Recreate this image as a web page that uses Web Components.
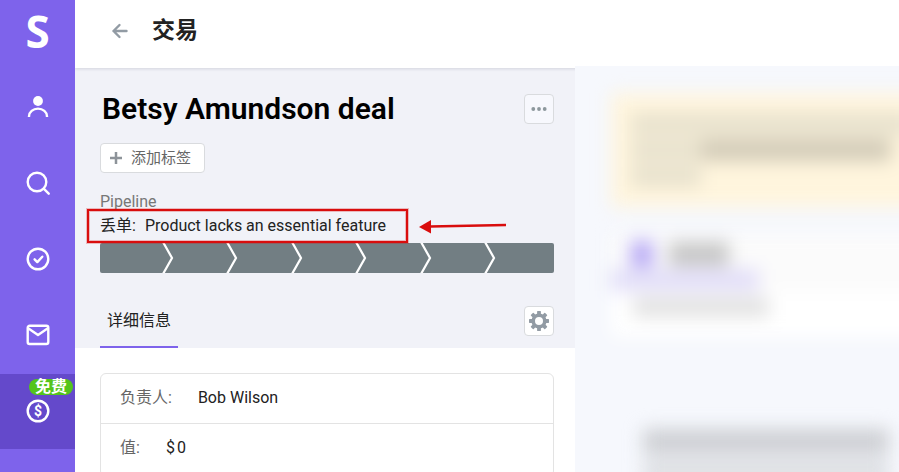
<!DOCTYPE html>
<html lang="zh-CN">
<head>
<meta charset="utf-8">
<meta name="viewport" content="width=device-width, initial-scale=1">
<title>交易</title>
<style>
    html, body { height: 100%; }
    body {
        margin: 0;
        overflow: hidden;
        background: #fff;
        color: #222;
        font: 16px/20px Roboto, "Noto Sans CJK SC", sans-serif;
    }
</style>
</head>
<body>
<crm-app>
    <crm-sidebar slot="sidebar">
        <nav-item icon="user" label="联系人"></nav-item>
        <nav-item icon="search" label="搜索"></nav-item>
        <nav-item icon="check" label="任务"></nav-item>
        <nav-item icon="mail" label="邮件"></nav-item>
        <nav-item icon="dollar" label="交易" active><span slot="badge">免费</span></nav-item>
    </crm-sidebar>
    <page-header slot="header">交易</page-header>
    <deal-summary>
        <span slot="name">Betsy Amundson deal</span>
        <span slot="pipeline">Pipeline</span>
        <lost-reason slot="reason" label="丢单:">Product lacks an essential feature</lost-reason>
        <stage-bar slot="stages" steps="7"></stage-bar>
    </deal-summary>
    <field-list>
        <field-row label="负责人:">Bob Wilson</field-row>
        <field-row label="值:"><span>$</span><span>0</span></field-row>
    </field-list>
    <activity-feed slot="feed"></activity-feed>
</crm-app>

<script>
    const icons = {
        user: '<circle cx="12" cy="6" r="4.9" fill="currentColor" stroke="none"/><path d="M3 22v-.8a9 7.6 0 0 1 18 0v.8" stroke-linecap="butt"/>',
        search: '<circle cx="11" cy="11" r="9.3"/><path d="M17.7 17.7l5 5"/>',
        check: '<circle cx="12" cy="12" r="10.3"/><path d="M8.6 12.3l2.7 2.8 5-5.4"/>',
        mail: '<rect x="1.7" y="2.7" width="20.6" height="18.3" rx="2"/><path d="M2.5 5.5l9.5 6.5 9.5-6.5"/>',
        dollar: '<circle cx="12" cy="12" r="10.3"/><text x="12" y="17" text-anchor="middle" font-family="Roboto, sans-serif" font-weight="700" font-size="14" fill="currentColor" stroke="none">$</text>'
    };

    class BaseElement extends HTMLElement {
        connectedCallback() {
            if (this.shadowRoot) return;
            this.attachShadow({ mode: 'open' });
            this.shadowRoot.innerHTML = this.template();
        }
    }

    class CrmApp extends BaseElement {
        template() {
            return `
                <style>
                    :host { display: flex; height: 100vh; overflow: hidden; }
                    .page { flex: 1; min-width: 0; display: flex; flex-direction: column; }
                    main {
                        flex: 1;
                        min-height: 0;
                        display: grid;
                        grid-template-columns: minmax(0, 125fr) minmax(0, 81fr);
                    }
                    .deal { overflow: hidden; }
                </style>
                <slot name="sidebar"></slot>
                <div class="page">
                    <slot name="header"></slot>
                    <main>
                        <div class="deal"><slot></slot></div>
                        <slot name="feed"></slot>
                    </main>
                </div>
            `;
        }
    }

    class CrmSidebar extends BaseElement {
        template() {
            return `
                <style>
                    :host { display: block; flex: 0 0 75px; background: #7e63eb; color: #fff; z-index: 2; }
                    .logo {
                        display: block;
                        height: 70px;
                        color: inherit;
                        text-align: center;
                        text-decoration: none;
                        font: 700 44px/62px "Open Sans", sans-serif;
                    }
                    nav { display: flex; flex-direction: column; }
                </style>
                <a class="logo" href="#">S</a>
                <nav><slot></slot></nav>
            `;
        }
    }

    class NavItem extends BaseElement {
        template() {
            return `
                <style>
                    :host { display: block; position: relative; height: 76px; }
                    :host([active]) { height: 75px; background: #6449cb; }
                    a { display: flex; height: 74px; align-items: center; justify-content: center; color: #fff; }
                    svg {
                        width: 24px;
                        height: 24px;
                        fill: none;
                        stroke: currentColor;
                        stroke-width: 2.4;
                        stroke-linecap: round;
                        stroke-linejoin: round;
                    }
                    ::slotted([slot="badge"]) {
                        position: absolute;
                        top: 5px;
                        right: 2px;
                        padding: 0 6px;
                        border-radius: 8px;
                        background: #54c41c;
                        color: #fff;
                        font-size: 16px;
                        font-weight: 700;
                        line-height: 16px;
                    }
                </style>
                <a href="#" aria-label="${this.getAttribute('label')}">
                    <svg viewBox="0 0 24 24" aria-hidden="true">${icons[this.getAttribute('icon')]}</svg>
                </a>
                <slot name="badge"></slot>
            `;
        }
    }

    class PageHeader extends BaseElement {
        template() {
            return `
                <style>
                    :host {
                        display: flex;
                        align-items: center;
                        gap: 19px;
                        height: 62px;
                        padding: 0 32px 6px;
                        background: #fff;
                        box-shadow: 0 1px 3px rgba(30, 30, 60, .14);
                        z-index: 1;
                    }
                    button { display: flex; padding: 4px; border: 0; background: none; color: #929ba4; }
                    svg { width: 18px; height: 18px; fill: none; stroke: currentColor; stroke-width: 2.4; stroke-linecap: round; stroke-linejoin: round; }
                    h1 { margin: 0; font-size: 23px; line-height: 32px; font-weight: 700; }
                </style>
                <button type="button" aria-label="返回">
                    <svg viewBox="0 0 18 18" aria-hidden="true"><path d="M15.5 9H2.5M8.5 3L2.5 9l6 6"/></svg>
                </button>
                <h1><slot></slot></h1>
            `;
        }
    }

    class DealSummary extends BaseElement {
        template() {
            return `
                <style>
                    :host { display: block; padding: 26px 21px 0 25px; background: #f1f2f8; }
                    .row { display: flex; align-items: center; justify-content: space-between; }
                    h2 { margin: 0 0 0 2px; color: #000; font-size: 30px; line-height: 30px; font-weight: 600; }
                    button { display: flex; align-items: center; box-sizing: border-box; font: inherit; border: 1px solid #d9dbde; border-radius: 4px; background: #fff; color: #666; }
                    .icon { width: 30px; height: 30px; padding: 0; justify-content: center; color: #929ba4; }
                    .more { background: #f7f8fd; color: #8d989d; }
                    .tag { height: 30px; margin: 19px 0 18px; padding: 0 13px 0 9px; gap: 9px; font-size: 15px; line-height: 20px; }
                    .tag svg { width: 12px; height: 12px; stroke: #8d9399; stroke-width: 2.5; }
                    .pipeline { color: #777; line-height: 22px; }
                    .tabs { margin-top: 33px; align-items: flex-start; }
                    .tab {
                        padding: 5px 7px 15px;
                        border-bottom: 2px solid #7e63eb;
                        color: #222;
                        text-decoration: none;
                    }
                </style>
                <div class="row">
                    <h2><slot name="name"></slot></h2>
                    <button class="icon more" type="button" aria-label="更多">
                        <svg width="16" height="4" viewBox="0 0 16 4" fill="currentColor" aria-hidden="true"><circle cx="2.3" cy="2" r="1.9"/><circle cx="8" cy="2" r="1.9"/><circle cx="13.7" cy="2" r="1.9"/></svg>
                    </button>
                </div>
                <button class="tag" type="button">
                    <svg viewBox="0 0 12 12" aria-hidden="true"><path d="M6 0v12M0 6h12"/></svg>
                    添加标签
                </button>
                <div class="pipeline"><slot name="pipeline"></slot></div>
                <slot name="reason"></slot>
                <slot name="stages"></slot>
                <div class="row tabs">
                    <a class="tab" href="#">详细信息</a>
                    <button class="icon" type="button" aria-label="设置">
                        <svg width="20" height="20" viewBox="-10 -10 20 20" aria-hidden="true">
                            <circle r="5.8" fill="none" stroke="currentColor" stroke-width="3.6"/>
                            <g fill="currentColor">
                                ${[0, 45, 90, 135, 180, 225, 270, 315].map(a => `<rect x="-1.9" y="-10" width="3.8" height="4" rx=".6" transform="rotate(${a})"/>`).join('')}
                            </g>
                        </svg>
                    </button>
                </div>
            `;
        }
    }

    class LostReason extends BaseElement {
        template() {
            return `
                <style>
                    :host { display: flex; position: relative; gap: 9px; height: 30px; line-height: 26px; }
                    .frame {
                        position: absolute;
                        inset: -4px 146px 0 -13px;
                        border: 2px solid #d90d0d;
                        box-shadow: 0 0 0 1px rgba(217, 13, 13, .25), inset 0 0 0 1px rgba(217, 13, 13, .25);
                        z-index: 1;
                    }
                    .arrow { position: absolute; right: 46px; top: 4px; width: 90px; height: 18px; }
                </style>
                <span>${this.getAttribute('label')}</span>
                <slot></slot>
                <span class="frame"></span>
                <svg class="arrow" viewBox="0 0 90 18" aria-hidden="true">
                    <path d="M12 9.5L88 8" stroke="#d90d0d" stroke-width="2.5"/>
                    <path d="M1 10L13 3v13.5z" fill="#d90d0d"/>
                </svg>
            `;
        }
    }

    class StageBar extends BaseElement {
        template() {
            const count = Number(this.getAttribute('steps'));
            const chevron = '<svg viewBox="0 0 12 30" aria-hidden="true"><path d="M1 -1L10 15L1 31"/></svg>';
            let steps = '';
            for (let i = 0; i < count; i++) {
                steps += `<span class="step">${i < count - 1 ? chevron : ''}</span>`;
            }
            return `
                <style>
                    :host { display: flex; height: 30px; padding-right: 2px; border-radius: 2px; background: #727e83; }
                    .step { flex: 1; position: relative; }
                    svg { position: absolute; right: -9px; top: 0; width: 12px; height: 30px; fill: none; stroke: #fff; stroke-width: 2.2; }
                </style>
                ${steps}
            `;
        }
    }

    class FieldList extends BaseElement {
        template() {
            return `
                <style>
                    :host {
                        display: block;
                        margin: 25px 21px 25px 25px;
                        border: 1px solid #e3e3e3;
                        border-radius: 6px;
                        background: #fff;
                    }
                    ::slotted(:not(:first-child)) { border-top: 1px solid #e3e3e3; }
                </style>
                <slot></slot>
            `;
        }
    }

    class FieldRow extends BaseElement {
        template() {
            return `
                <style>
                    :host { display: block; padding: 14px 19px 18px; }
                    :host(:first-child) { padding-bottom: 15px; }
                    dl { display: flex; gap: 26px; margin: 0; }
                    dt { color: #666; }
                    dd { display: flex; gap: 2px; margin: 0; }
                </style>
                <dl>
                    <dt>${this.getAttribute('label')}</dt>
                    <dd><slot></slot></dd>
                </dl>
            `;
        }
    }

    // Locked preview of the feed: every line is a soft placeholder bar
    class ActivityFeed extends BaseElement {
        template() {
            return `
                <style>
                    :host { display: block; overflow: hidden; margin-top: -2px; background: #f6f8fd; z-index: 2; }
                    .feed { display: flex; flex-direction: column; margin-right: -32px; padding: 27px 0 0 36px; filter: blur(9px); }
                    .note { display: flex; flex-direction: column; gap: 4px; padding: 20px 20px 20px; background: #fff5dd; }
                    .line { height: 22px; background: #e8e2ce; }
                    .split { display: grid; grid-template-columns: 70px 190px; }
                    .dark { background: #d2cbb8; }
                    .short { width: 70px; }
                    .card { margin-top: 26px; background: #fff; }
                    .head { display: flex; gap: 16px; align-items: center; padding: 8px 20px 2px; background: #fbfbfb; }
                    .dot { width: 22px; height: 26px; background: #b5a6f5; }
                    .title { width: 60px; height: 24px; background: #c6c6c6; }
                    .active { width: 148px; height: 22px; background: #e2def8; }
                    .tabs { background: #fbfbfb; }
                    .hint { width: 136px; height: 20px; margin: 6px 0 20px 22px; background: #e2e2e2; }
                    .post { display: flex; flex-direction: column; gap: 4px; margin: 92px 0 0 32px; }
                    .post .line { width: 246px; height: 24px; background: #cdcfd3; }
                    .post .sub { height: 30px; background: #dfe1e5; }
                </style>
                <div class="feed" aria-hidden="true">
                    <div class="note">
                        <div class="line"></div>
                        <div class="split"><div class="line"></div><div class="line dark"></div></div>
                        <div class="line short"></div>
                    </div>
                    <div class="card">
                        <div class="head"><div class="dot"></div><div class="title"></div></div>
                        <div class="tabs"><div class="active"></div></div>
                        <div class="hint"></div>
                    </div>
                    <div class="post">
                        <div class="line"></div>
                        <div class="line sub"></div>
                    </div>
                </div>
            `;
        }
    }

    customElements.define('crm-app', CrmApp);
    customElements.define('crm-sidebar', CrmSidebar);
    customElements.define('nav-item', NavItem);
    customElements.define('page-header', PageHeader);
    customElements.define('deal-summary', DealSummary);
    customElements.define('lost-reason', LostReason);
    customElements.define('stage-bar', StageBar);
    customElements.define('field-list', FieldList);
    customElements.define('field-row', FieldRow);
    customElements.define('activity-feed', ActivityFeed);
</script>
</body>
</html>
